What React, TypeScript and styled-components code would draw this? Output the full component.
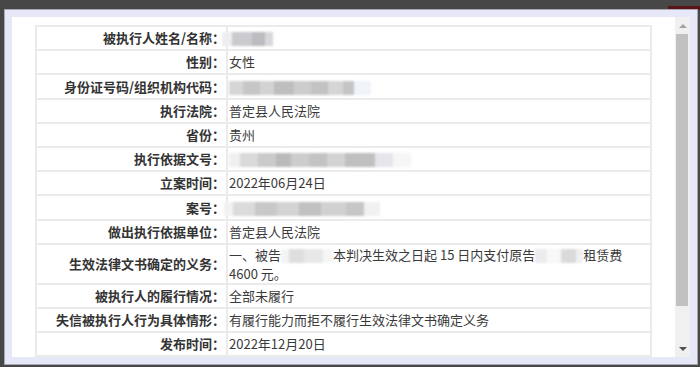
import React from "react";
import styled, { createGlobalStyle } from "styled-components";

const GlobalStyle = createGlobalStyle`
  html, body { margin: 0; padding: 0; background: #474747; }
  body { font-family: "Noto Sans CJK SC", "Noto Sans", sans-serif; }
`;

const Page = styled.div`
  position: relative;
  width: 700px;
  height: 367px;
  box-sizing: border-box;
  padding: 9px 0 0 4px;
  background: #474747;
  overflow: hidden;
`;

// piece of the page behind the overlay, peeking out at the top right
const BehindBar = styled.div`
  position: absolute;
  top: 6px;
  right: 0;
  width: 32px;
  height: 4px;
  background: #5a1417;
`;

const Modal = styled.div`
  position: relative;
  width: 694px;
  height: 356px;
  box-sizing: border-box;
  border: 1px solid #a7a7b6;
  background: #e6e7f7;
  padding: 7px;
  display: flex;
`;

const Content = styled.div`
  flex: 1;
  background: #fff;
  padding: 8px 0 0 23px;
  overflow: hidden;
`;

const Scrollbar = styled.div`
  width: 15px;
  background: #f0f0f0;
  display: flex;
  flex-direction: column;
`;

const ArrowBox = styled.div<{ $down?: boolean }>`
  height: 17px;
  display: flex;
  align-items: center;
  justify-content: center;
  &::after {
    content: "";
    width: 0;
    height: 0;
    border-left: 4px solid transparent;
    border-right: 4px solid transparent;
    ${(p) =>
      p.$down
        ? "border-top: 4px solid #505050;"
        : "border-bottom: 4px solid #a3a3a3;"}
  }
`;

const Thumb = styled.div`
  height: 272px;
  margin: 0 2px 0 1px;
  background: #c1c1c1;
`;

const Track = styled.div`
  flex: 1;
`;

const Table = styled.table`
  width: 617px;
  table-layout: fixed;
  border-collapse: separate;
  border-spacing: 0;
  border: 1px solid #ebebeb;
  font-size: 13px;
  color: #333;
`;

const Label = styled.td`
  width: 187px;
  padding: 3px 1px;
  line-height: 16px;
  border: 1px solid #ebebeb;
  text-align: right;
  font-weight: bold;
  white-space: nowrap;
`;

const Value = styled.td<{ $multi?: boolean }>`
  padding: ${(p) => (p.$multi ? "0 1px" : "3px 1px")};
  line-height: ${(p) => (p.$multi ? "19px" : "16px")};
  border: 1px solid #ebebeb;
  text-align: left;
  white-space: nowrap;
  color: #3a3a3a;
`;

const Blur = styled.span<{ $w: number; $tones: string; $shift?: number }>`
  display: inline-block;
  vertical-align: middle;
  width: ${(p) => p.$w}px;
  height: 14px;
  margin-left: ${(p) => p.$shift ?? 0}px;
  background: linear-gradient(to right, ${(p) => p.$tones});
  filter: blur(1.2px);
`;

type Row = { label: string; value: React.ReactNode; multi?: boolean };

const rows: Row[] = [
  {
    label: "被执行人姓名/名称：",
    value: (
      <Blur
        $w={58}
        $shift={-7}
        $tones="#eeeef0 0 18%, #cacacf 18% 52%, #bbbbc0 52% 74%, #d8d8dc 74% 88%, #fff 88%"
      />
    ),
  },
  { label: "性别：", value: "女性" },
  {
    label: "身份证号码/组织机构代码：",
    value: (
      <Blur
        $w={142}
        $tones="#d6d6d6 0 10%, #c6c6c6 10% 22%, #d3d3d3 22% 32%, #bebebe 32% 46%, #cccccc 46% 58%, #c3c3c3 58% 70%, #d5d5d5 70% 80%, #c4c4c4 80% 88%, #eef4f8 88%"
      />
    ),
  },
  { label: "执行法院：", value: "普定县人民法院" },
  { label: "省份：", value: "贵州" },
  {
    label: "执行依据文号：",
    value: (
      <Blur
        $w={182}
        $tones="#f0f0f0 0 6%, #d9d9d9 6% 16%, #cacaca 16% 26%, #bababa 26% 34%, #cdcdcd 34% 44%, #c3c3c3 44% 54%, #d3d3d3 54% 64%, #c0c0c0 64% 80%, #e4e6ea 80% 90%, #f6f6f6 90%"
      />
    ),
  },
  { label: "立案时间：", value: "2022年06月24日" },
  {
    label: "案号：",
    value: (
      <Blur
        $w={156}
        $shift={-5}
        $tones="#f2f2f2 0 6%, #dbdbdb 6% 20%, #c8c8c8 20% 34%, #d3d3d3 34% 48%, #c1c1c1 48% 62%, #d1d1d1 62% 78%, #c6c6c6 78% 90%, #f1f1f1 90%"
      />
    ),
  },
  { label: "做出执行依据单位：", value: "普定县人民法院" },
  {
    label: "生效法律文书确定的义务：",
    multi: true,
    value: (
      <>
        一、被告
        <Blur $w={52} $tones="#f4f4f4 0 15%, #dedede 15% 45%, #e8e8e8 45% 80%, #f6f6f6 80%" />
        本判决生效之日起 15 日内支付原告
        <Blur $w={48} $tones="#ececec 0 25%, #f8f8f8 25% 55%, #dadada 55% 85%, #f0f0f0 85%" />
        租赁费
        <br />
        4600 元。
      </>
    ),
  },
  { label: "被执行人的履行情况：", value: "全部未履行" },
  { label: "失信被执行人行为具体情形：", value: "有履行能力而拒不履行生效法律文书确定义务" },
  { label: "发布时间：", value: "2022年12月20日" },
];

export default function App() {
  return (
    <>
      <GlobalStyle />
      <Page>
        <BehindBar />
        <Modal>
          <Content>
            <Table>
              <tbody>
                {rows.map((r) => (
                  <tr key={r.label}>
                    <Label>{r.label}</Label>
                    <Value $multi={r.multi}>{r.value}</Value>
                  </tr>
                ))}
              </tbody>
            </Table>
          </Content>
          <Scrollbar>
            <ArrowBox />
            <Thumb />
            <Track />
            <ArrowBox $down />
          </Scrollbar>
        </Modal>
      </Page>
    </>
  );
}
